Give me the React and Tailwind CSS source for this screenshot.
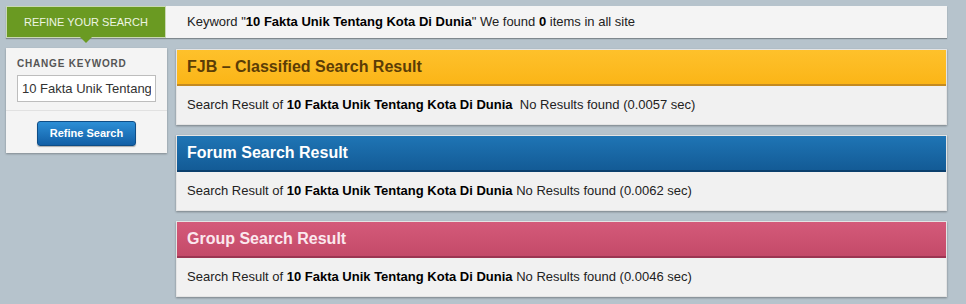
import React from 'react';

const KEYWORD = '10 Fakta Unik Tentang Kota Di Dunia';

// ─── Result panel ─────────────────────────────────────────────────────────────

const ResultPanel = ({ title, headerClass, titleClass, time, extraSpace }) => (
  <div className="bg-[#f1f1f1] shadow-[0_1px_2px_rgba(0,0,0,0.35)] border border-[#e4e4e4]">
    <div className={`h-[36px] flex items-center px-[10px] ${headerClass}`}>
      <span className={`text-[16px] font-bold ${titleClass}`}>{title}</span>
    </div>
    <div className="h-[38px] flex items-center px-[10px] text-[13px] text-[#222]">
      <span>
        Search Result of <b className="text-black">{KEYWORD}</b>
        {extraSpace ? '\u00a0 ' : ' '}No Results found ({time} sec)
      </span>
    </div>
  </div>
);

export default function App() {
  return (
    <div
      className="w-[966px] h-[304px] bg-[#b6c3cc] pt-[6px] pl-[6px]"
      style={{ fontFamily: '"Liberation Sans", Arial, sans-serif' }}
    >
      {/* ─── Top bar ─── */}
      <div className="w-[941px] h-[32px] bg-[#f4f4f4] flex items-center shadow-[0_1px_1px_rgba(0,0,0,0.3)]">
        <div className="relative w-[160px] h-full bg-[#6a9a22] border border-[#c9d8b4] flex items-center justify-center">
          <span className="text-[11px] text-[#eef5e2] uppercase">Refine your search</span>
          <div className="absolute left-1/2 -translate-x-1/2 top-full w-0 h-0 border-l-[6px] border-r-[6px] border-t-[6px] border-l-transparent border-r-transparent border-t-[#6a9a22]" />
        </div>
        <div className="ml-[21px] text-[13px] text-[#222]">
          Keyword "<b className="text-black">{KEYWORD}</b>" We found <b className="text-black">0</b> items in all site
        </div>
      </div>

      <div className="flex mt-[10px] items-start">
        {/* ─── Sidebar ─── */}
        <div className="w-[161px] bg-[#f4f4f4] shadow-[0_1px_2px_rgba(0,0,0,0.3)]">
          <div className="px-[11px] pt-[9px] pb-[8px]">
            <p className="text-[10px] font-bold tracking-[0.08em] text-[#555] uppercase leading-[14px]">Change keyword</p>
            <input
              readOnly
              defaultValue={KEYWORD}
              className="mt-[4px] w-full h-[27px] bg-white border border-[#bdbdbd] px-[4px] text-[13px] text-[#333] outline-none"
            />
          </div>
          <div className="border-t border-[#e1e1e1] flex justify-center pt-[10px] pb-[7px]">
            <button className="w-[99px] h-[25px] rounded-[3px] bg-gradient-to-b from-[#2d8fd6] to-[#125fa6] border border-[#0e4d86] text-white text-[11px] font-bold shadow-[0_1px_1px_rgba(0,0,0,0.3)]">
              Refine Search
            </button>
          </div>
        </div>

        {/* ─── Results ─── */}
        <div className="ml-[9px] mt-[1px] w-[771px] flex flex-col gap-[10px]">
          <ResultPanel
            title="FJB – Classified Search Result"
            headerClass="bg-gradient-to-b from-[#fec12b] to-[#fbb516] border-b-2 border-[#c48a20]"
            titleClass="text-[#5b3d06]"
            time="0.0057"
            extraSpace
          />
          <ResultPanel
            title="Forum Search Result"
            headerClass="bg-gradient-to-b from-[#1f75b5] to-[#135b96] border-b-2 border-[#0b3f6d]"
            titleClass="text-white"
            time="0.0062"
          />
          <ResultPanel
            title="Group Search Result"
            headerClass="bg-gradient-to-b from-[#d45a7a] to-[#c44a69] border-b-2 border-[#9c3552]"
            titleClass="text-[#fbe8ee]"
            time="0.0046"
          />
        </div>
      </div>
    </div>
  );
}
